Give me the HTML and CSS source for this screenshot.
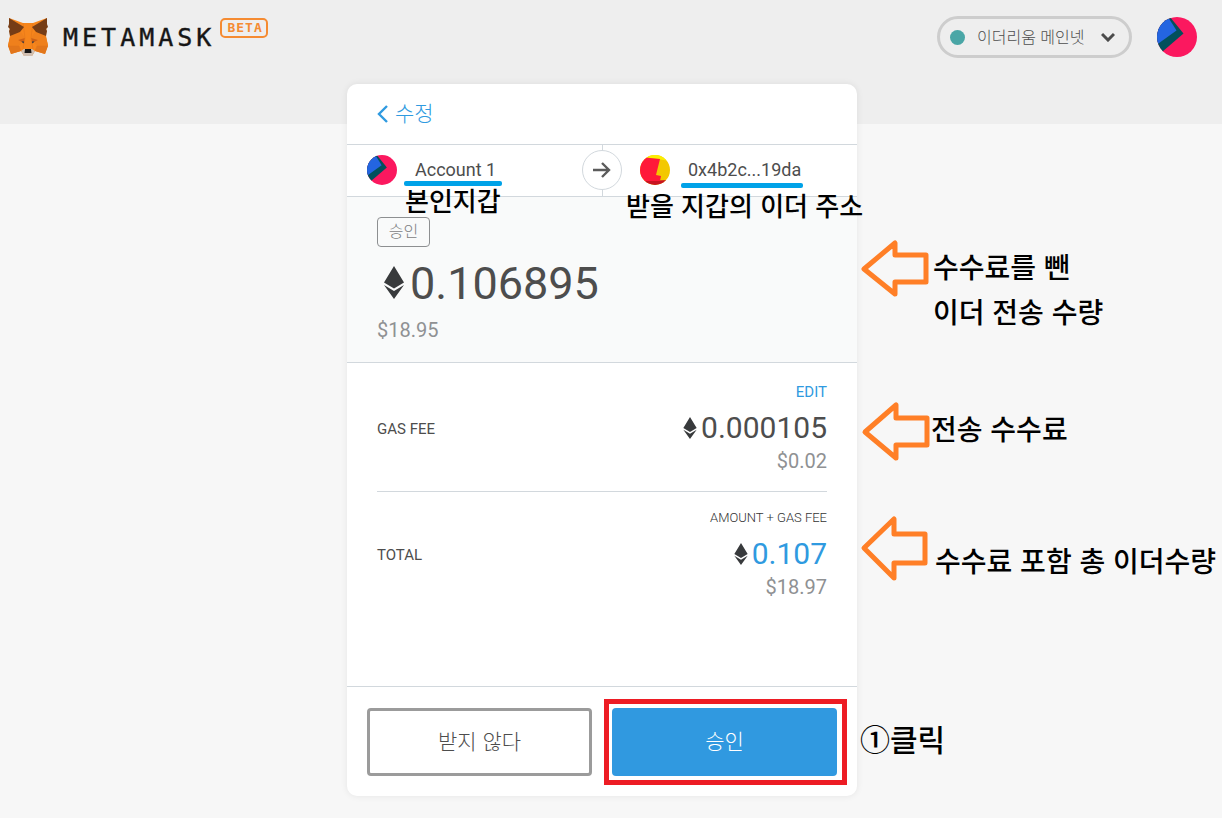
FILE: index.html
```
<!DOCTYPE html>
<html lang="ko">
<head>
    <meta charset="UTF-8">
    <meta name="viewport" content="width=device-width, initial-scale=1.0">
    <title>MetaMask</title>
    <link rel="stylesheet" href="styles.css">
</head>
<body>
    <!-- Shared shapes -->
    <svg class="defs" aria-hidden="true">
        <symbol id="ether" viewBox="0 0 20 33">
            <path d="M10 0 L20 16.5 L10 22.5 L0 16.5 Z M0 19 L10 25 L20 19 L10 33 Z" fill="#383a3c"/>
        </symbol>
        <symbol id="avatar-me" viewBox="0 0 40 40">
            <clipPath id="clip-me"><circle cx="20" cy="20" r="20"/></clipPath>
            <g clip-path="url(#clip-me)">
                <rect width="40" height="40" fill="#fb185f"/>
                <path d="M0 0 H13 L26.5 16.5 L5 35 L0 34 Z" fill="#02505c"/>
                <path d="M0 0 H11 L19.5 13.5 L0 27.5 Z" fill="#2465e1"/>
            </g>
        </symbol>
        <symbol id="avatar-to" viewBox="0 0 30 30">
            <clipPath id="clip-to"><circle cx="15" cy="15" r="15"/></clipPath>
            <g clip-path="url(#clip-to)">
                <rect width="30" height="30" fill="#f3c801"/>
                <path d="M0 0 H30 V6 L4 2 Z" fill="#fbee02"/>
                <path d="M0 26 L30 25 V30 H0 Z" fill="#c81322"/>
                <path d="M0 2 L20 4 L16 20 L21 21 L20 26 L0 26 Z" fill="#ff1939"/>
            </g>
        </symbol>
    </svg>

    <header>
        <div class="brand">
            <svg class="fox" viewBox="0 0 40 39" aria-hidden="true">
                <path d="M1 0 L15 5 H25 L39 0 L38 19 L40 27 L37 36 L27 33 L24 38 H16 L13 33 L3 36 L0 27 L2 19 Z" fill="#f6851b"/>
                <path d="M0 28 H11 L13 33 L3 36 Z M40 28 H29 L27 33 L37 36 Z" fill="#e2761b"/>
                <path d="M2 18 L13 14 L17 20 L11 28 H0 Z M38 18 L27 14 L23 20 L29 28 H40 Z" fill="#ef801c"/>
                <path d="M10 22 L17 20 L16 25 Z M30 22 L23 20 L24 25 Z" fill="#cd6116"/>
                <path d="M0 28 H11 L13 33 M40 28 H29 L27 33 M15 5 L17 20 L15 31 M25 5 L23 20 L25 31" fill="none" stroke="#e2761b" stroke-width="0.6"/>
                <path d="M1 0 L16 9 L12 14 L2 18 L1 13 L2 11 L0 9 L1 6 Z M39 0 L24 9 L28 14 L38 18 L39 13 L38 11 L40 9 L39 6 Z" fill="#763d16"/>
                <path d="M13 33 L16 31 H24 L27 33 L24 38 H16 Z" fill="#d0bfb2"/>
                <path d="M13.5 23.5 L16 23.5 L15.5 25.5 Z M26.5 23.5 L24 23.5 L24.5 25.5 Z" fill="#233447"/>
                <path d="M17 31 H23 L23.5 35 H16.5 Z" fill="#161616"/>
            </svg>
            <span class="brand-name">METAMASK</span>
            <span class="beta">BETA</span>
        </div>
        <div class="network">
            <span class="network-dot"></span>
            <select class="network-select" aria-label="네트워크">
                <option>이더리움 메인넷</option>
            </select>
            <svg class="network-arrow" viewBox="0 0 14 10" aria-hidden="true">
                <path d="M1 2 L7 8 L13 2" fill="none" stroke="#4b4b4b" stroke-width="3"/>
            </svg>
        </div>
        <svg class="account-avatar" role="img" aria-label="Account 1"><use href="#avatar-me"/></svg>
    </header>

    <main>
        <div class="card">
            <div class="card-header">
                <a class="back" href="#">
                    <svg class="back-icon" viewBox="0 0 11 18" aria-hidden="true">
                        <path d="M10 1 L2 9 L10 17" fill="none" stroke="#2f9ae0" stroke-width="2.4"/>
                    </svg>수정</a>
            </div>

            <!-- From / to -->
            <div class="accounts">
                <div class="account">
                    <svg class="avatar" aria-hidden="true"><use href="#avatar-me"/></svg>
                    <span class="account-name">Account 1</span>
                </div>
                <div class="account account-to">
                    <svg class="avatar" aria-hidden="true"><use href="#avatar-to"/></svg>
                    <span class="account-name">0x4b2c...19da</span>
                </div>
                <div class="arrow-circle">
                    <svg class="arrow-right" viewBox="0 0 18 16" aria-hidden="true">
                        <path d="M0 8 H16 M9 1 L16 8 L9 15" fill="none" stroke="#5b5b5b" stroke-width="2.4"/>
                    </svg>
                </div>
                <span class="underline underline-from"></span>
                <span class="underline underline-to"></span>
                <span class="note note-small note-from">본인지갑</span>
                <span class="note note-small note-to">받을 지갑의 이더 주소</span>
            </div>

            <!-- Amount -->
            <section class="summary">
                <span class="tag">승인</span>
                <div class="summary-amount">
                    <svg class="ether-large" aria-hidden="true"><use href="#ether"/></svg>
                    <span>0.106895</span>
                </div>
                <div class="summary-fiat">$18.95</div>
                <svg class="pointer pointer-amount" viewBox="0 0 68 60" aria-hidden="true">
                    <path d="M3 30 L34 4 V16 H65 V43 H34 V55 Z"/>
                </svg>
                <p class="note note-amount">수수료를 뺀<br>이더 전송 수량</p>
            </section>

            <!-- Fees -->
            <section class="details">
                <div class="row">
                    <span class="row-label">GAS FEE</span>
                    <div class="row-values">
                        <a class="edit" href="#">EDIT</a>
                        <div class="row-amount">
                            <svg class="ether-small" aria-hidden="true"><use href="#ether"/></svg>
                            <span>0.000105</span>
                        </div>
                        <div class="row-fiat">$0.02</div>
                    </div>
                    <svg class="pointer pointer-fee" viewBox="0 0 68 60" aria-hidden="true">
                        <path d="M4 31 L35 4 V17 H66 V44 H35 V57 Z"/>
                    </svg>
                    <span class="note note-fee">전송 수수료</span>
                </div>
                <div class="row">
                    <span class="row-label">TOTAL</span>
                    <div class="row-values">
                        <div class="row-hint">AMOUNT + GAS FEE</div>
                        <div class="row-amount row-amount-total">
                            <svg class="ether-small" aria-hidden="true"><use href="#ether"/></svg>
                            <span>0.107</span>
                        </div>
                        <div class="row-fiat">$18.97</div>
                    </div>
                    <svg class="pointer pointer-total" viewBox="0 0 68 60" aria-hidden="true">
                        <path d="M3 30 L33 1 V16 H64 V45 H33 V60 Z"/>
                    </svg>
                    <span class="note note-total">수수료 포함 총 이더수량</span>
                </div>
            </section>

            <footer>
                <button class="btn btn-cancel" type="button">받지 않다</button>
                <div class="confirm">
                    <button class="btn btn-confirm" type="button">승인</button>
                    <span class="highlight"></span>
                </div>
                <span class="note note-click">①클릭</span>
            </footer>
        </div>
    </main>
</body>
</html>
```

FILE: styles.css
```
/* Global styles */
* {
    box-sizing: border-box;
}

body {
    margin: 0;
    min-height: 100vh;
    font-family: Roboto, "Noto Sans CJK KR", sans-serif;
    background: #f7f7f7;
    color: #4d4d4d;
}

a {
    color: #2f9ae0;
    text-decoration: none;
}

.defs {
    position: absolute;
    width: 0;
    height: 0;
}

/* Header */
header {
    display: flex;
    align-items: flex-start;
    height: 124px;
    padding: 16px 25px 0 8px;
    background: #eeeeee;
}

.brand {
    display: flex;
    align-items: flex-start;
    margin-right: auto;
    font-family: "DejaVu Sans Mono", monospace;
}

.fox {
    width: 40px;
    height: 39px;
    margin-top: 2px;
}

.brand-name {
    margin-left: 15px;
    font-size: 25px;
    line-height: 44px;
    letter-spacing: 4px;
    color: #161616;
    -webkit-text-stroke: 0.4px #161616;
}

.beta {
    margin: 2px 0 0 5px;
    padding: 0 3px 0 5px;
    border: 2px solid #f58b32;
    border-radius: 5px;
    font-size: 13px;
    font-weight: bold;
    line-height: 16px;
    letter-spacing: 1px;
    color: #f58b32;
}

.network {
    position: relative;
    display: flex;
    align-items: center;
    width: 195px;
    height: 42px;
    padding-left: 10px;
    border: 3px solid #cdcdcd;
    border-radius: 21px;
}

.network-dot {
    width: 15px;
    height: 15px;
    border-radius: 50%;
    background: #4aa6a6;
}

.network-select {
    flex: 1;
    height: 36px;
    padding: 0 0 2px 12px;
    border: none;
    appearance: none;
    background: transparent;
    font-family: "Noto Sans CJK KR", sans-serif;
    font-size: 16px;
    font-weight: 300;
    color: #4d4d4d;
}

.network-arrow {
    position: absolute;
    right: 14px;
    width: 14px;
    height: 10px;
    pointer-events: none;
}

.account-avatar {
    width: 40px;
    height: 40px;
    margin: 1px 0 0 25px;
}

/* Card */
main {
    margin-top: -40px;
    padding: 0 18px 22px 0;
}

.card {
    position: relative;
    max-width: 510px;
    margin: 0 auto;
    border-radius: 10px;
    background: #ffffff;
    box-shadow: 0 0 7px rgba(0, 0, 0, 0.08);
}

.card-header {
    padding: 15px 30px;
    border-bottom: 1px solid #d2d8dd;
}

.back {
    display: flex;
    align-items: center;
    gap: 7px;
    font-size: 21px;
    font-weight: 300;
    line-height: 30px;
}

.back-icon {
    width: 11px;
    height: 18px;
}

/* From / to */
.accounts {
    position: relative;
    display: grid;
    grid-template-columns: 1fr 1fr;
    height: 52px;
    border-bottom: 1px solid #d2d8dd;
}

.account {
    display: flex;
    align-items: center;
    gap: 18px;
    padding: 0 0 1px 20px;
}

.account-to {
    padding-left: 37px;
    border-left: 1px solid #d2d8dd;
}

.avatar {
    width: 30px;
    height: 30px;
}

.account-name {
    font-size: 18px;
    line-height: 24px;
}

.arrow-circle {
    position: absolute;
    top: 5px;
    left: calc(50% - 20px);
    display: flex;
    align-items: center;
    justify-content: center;
    width: 40px;
    height: 40px;
    border: 1px solid #d2d8dd;
    border-radius: 50%;
    background: #ffffff;
}

.arrow-right {
    width: 18px;
    height: 16px;
}

/* Amount */
.summary {
    position: relative;
    padding: 20px 30px;
    border-bottom: 1px solid #d2d8dd;
    background: #f9fafa;
}

.tag {
    display: block;
    width: 53px;
    border: 1px solid #8d8f91;
    border-radius: 4px;
    font-size: 16px;
    font-weight: 300;
    line-height: 28px;
    text-align: center;
    color: #7d8082;
}

.summary-amount {
    display: flex;
    align-items: center;
    gap: 6px;
    margin: 10px 0 7px;
    padding-left: 7px;
    font-size: 45px;
    line-height: 54px;
}

.ether-large {
    width: 20px;
    height: 33px;
    margin-bottom: 4px;
}

.summary-fiat {
    font-size: 20px;
    line-height: 24px;
    color: #8f9193;
}

/* Fees */
.details {
    min-height: 324px;
    padding: 3px 30px 0;
    border-bottom: 1px solid #d2d8dd;
}

.row {
    position: relative;
    display: flex;
    align-items: center;
    justify-content: space-between;
    padding: 16px 0 15px;
}

.row:first-child {
    border-bottom: 1px solid #d2d8dd;
}

.row-label {
    font-size: 15px;
    line-height: 20px;
}

.row-values {
    text-align: right;
}

.edit {
    display: block;
    font-size: 15px;
    line-height: 20px;
}

.row-hint {
    font-size: 13px;
    font-weight: 300;
    line-height: 20px;
    color: #333333;
}

.row-amount {
    display: flex;
    align-items: center;
    justify-content: flex-end;
    gap: 4px;
    margin-top: 8px;
    font-size: 30px;
    line-height: 36px;
}

.row-amount-total {
    color: #2f9ae0;
}

.ether-small {
    width: 14px;
    height: 22px;
}

.row-fiat {
    font-size: 20px;
    line-height: 30px;
    color: #8f9193;
}

/* Buttons */
footer {
    position: relative;
    display: grid;
    grid-template-columns: 1fr 1fr;
    gap: 20px;
    padding: 21px 20px 20px;
}

.btn {
    width: 100%;
    height: 68px;
    padding: 0 0 4px;
    border-radius: 4px;
    font-family: "Noto Sans CJK KR", sans-serif;
    font-size: 21px;
    font-weight: 300;
    cursor: pointer;
}

.btn-cancel {
    border: 3px solid #9b9b9b;
    background: #ffffff;
    color: #4d4d4d;
}

.confirm {
    position: relative;
}

.btn-confirm {
    border: none;
    background: #3099e0;
    color: #ffffff;
}

.highlight {
    position: absolute;
    inset: -9px -10px -9px -8px;
    border: 5px solid #ed1c24;
    pointer-events: none;
}

/* Guide notes lying over the page */
.note {
    position: absolute;
    z-index: 1;
    margin: 0;
    font-family: "Noto Sans CJK KR", sans-serif;
    font-size: 28px;
    font-weight: 500;
    line-height: 45px;
    white-space: nowrap;
    color: #000000;
}

.note-small {
    font-size: 26px;
    line-height: 36px;
}

.note-from {
    top: 37px;
    left: 58px;
}

.note-to {
    top: 42px;
    left: 279px;
}

.note-amount {
    top: 47px;
    left: calc(100% + 76px);
}

.note-fee {
    top: 40px;
    left: calc(100% + 104px);
}

.note-total {
    top: 46px;
    left: calc(100% + 108px);
}

.note-click {
    top: 29px;
    left: calc(100% + 3px);
    font-size: 30px;
}

.underline {
    position: absolute;
    height: 5px;
    border-radius: 2px;
    background: #00a2e8;
}

.underline-from {
    top: 36px;
    left: 57px;
    width: 98px;
}

.underline-to {
    top: 38px;
    left: 334px;
    width: 122px;
}

.pointer {
    position: absolute;
    width: 68px;
    height: 60px;
    overflow: visible;
    fill: none;
    stroke: #ff7f27;
    stroke-width: 5;
    stroke-linejoin: round;
}

.pointer-amount {
    top: 42px;
    left: calc(100% + 4px);
}

.pointer-fee {
    top: 35px;
    left: calc(100% + 34px);
}

.pointer-total {
    top: 26px;
    left: calc(100% + 34px);
}
```
